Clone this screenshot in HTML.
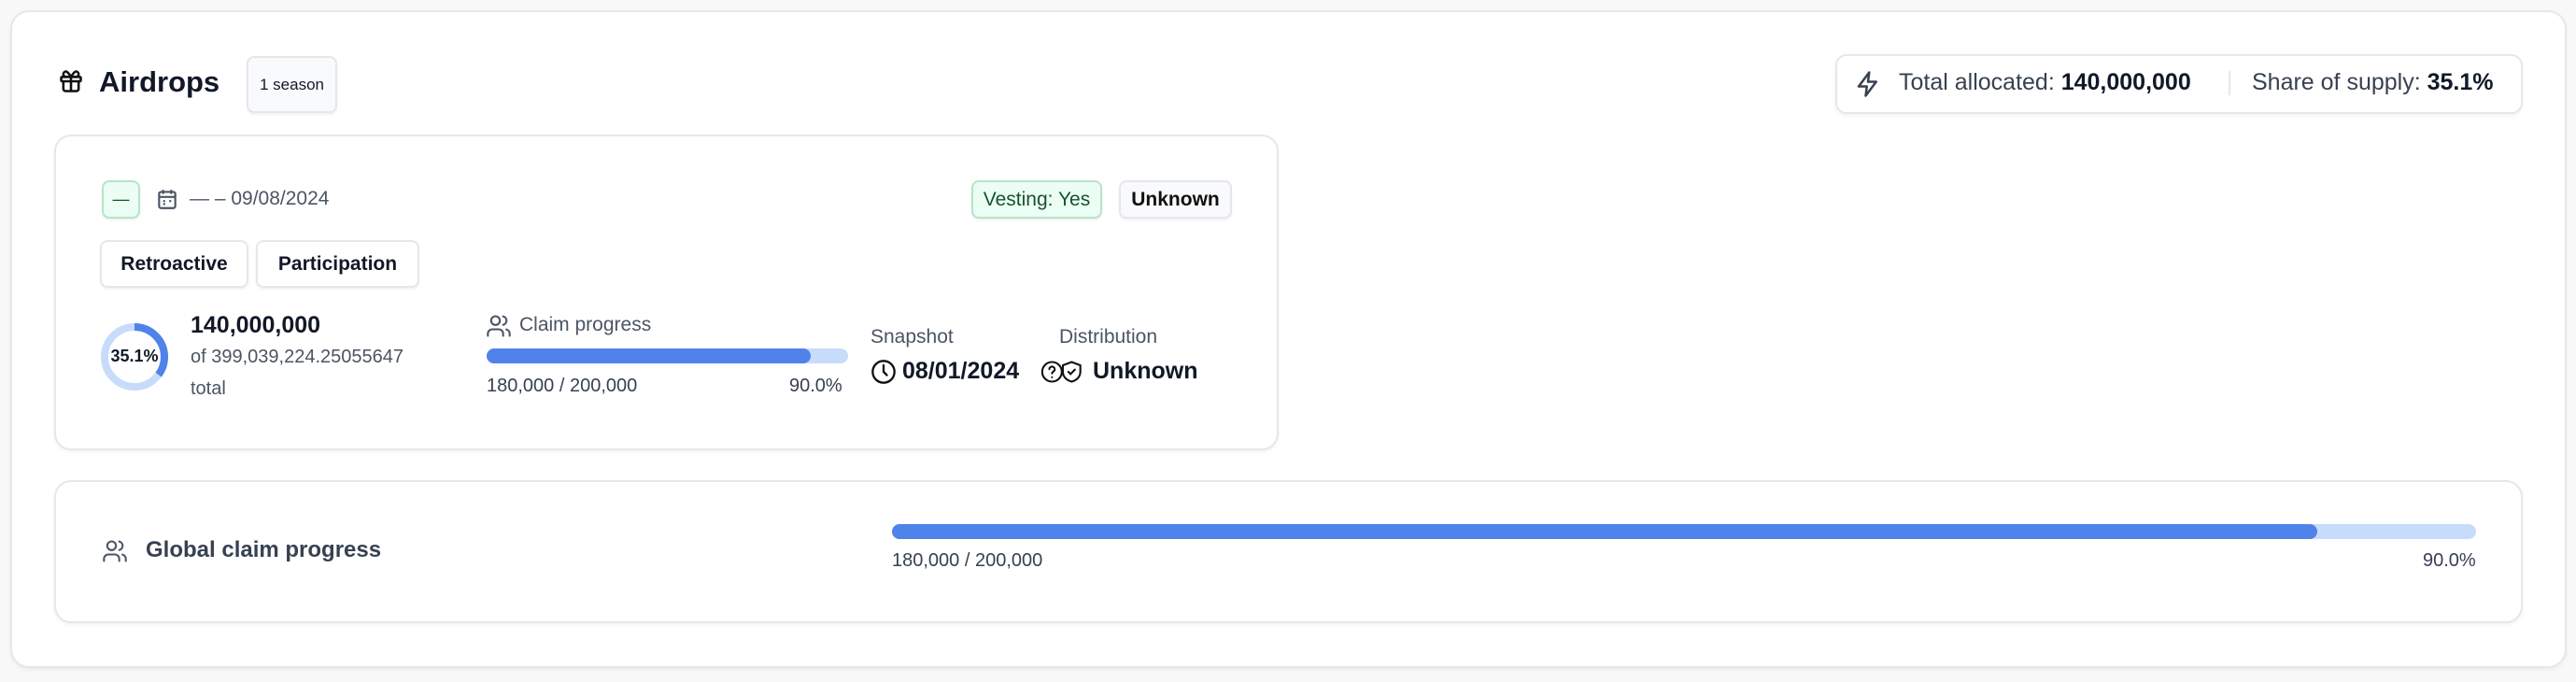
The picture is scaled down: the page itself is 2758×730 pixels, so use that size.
<!DOCTYPE html>
<html><head><meta charset="utf-8"><style>
*{box-sizing:border-box;margin:0;padding:0}
body{width:2758px;height:730px;background:#f8f8f9;font-family:"Liberation Sans",sans-serif;color:#111827;position:relative;overflow:hidden}
.abs{position:absolute}
.card{position:absolute;background:#fff;border:2px solid #e5e7eb;border-radius:18px;box-shadow:0 2px 4px rgba(0,0,0,0.05)}
.badge{position:absolute;border:2px solid #e5e7eb;border-radius:8px;background:#f9fafb;display:flex;align-items:center;justify-content:center;box-shadow:0 2px 2px rgba(0,0,0,0.05)}
.t{position:absolute;white-space:nowrap;line-height:1}
.grey{color:#4b5563}
</style></head><body>
<div class="card" style="left:11px;top:11px;width:2737px;height:704px;border-radius:20px"></div>

<svg class="abs" style="left:62px;top:73px" width="28" height="28" viewBox="0 0 24 24" fill="none" stroke="#111" stroke-width="2.2" stroke-linecap="round" stroke-linejoin="round"><rect x="3" y="8" width="18" height="4" rx="1"/><path d="M12 8v13M19 12v7a2 2 0 0 1-2 2H7a2 2 0 0 1-2-2v-7M7.5 8a2.5 2.5 0 0 1 0-5C9 3 12 8 12 8s3-5 4.5-5a2.5 2.5 0 0 1 0 5"/></svg>
<div class="t" style="left:106px;top:72px;font-size:31px;font-weight:bold">Airdrops</div>
<div class="badge" style="left:264px;top:60px;width:97px;height:61px;font-size:17px">1 season</div>

<div class="card" style="left:1965px;top:58px;width:736px;height:64px;border-radius:12px"></div>
<svg class="abs" style="left:1985px;top:75px" width="30" height="30" viewBox="0 0 24 24" fill="none" stroke="#374151" stroke-width="2" stroke-linejoin="round"><path d="M13 2L4 14h7l-1 8 9-12h-7l1-8z"/></svg>
<div class="t" style="left:2033px;top:76px;font-size:25px;color:#374151">Total allocated: <b style="color:#111827">140,000,000</b></div>
<div class="abs" style="left:2386px;top:76px;width:2px;height:26px;background:#e5e7eb"></div>
<div class="t" style="left:2411px;top:76px;font-size:25px;color:#374151">Share of supply: <b style="color:#111827">35.1%</b></div>

<div class="card" style="left:58px;top:144px;width:1311px;height:338px"></div>
<div class="badge" style="left:109px;top:193px;width:41px;height:41px;background:#ecfdf3;border-color:#b7e4c7;font-size:18px;color:#14532d">—</div>
<svg class="abs" style="left:166px;top:199px" width="26" height="28" viewBox="0 0 24 24" fill="none" stroke="#4b5563" stroke-width="2"><rect x="4" y="5" width="16" height="16" rx="2"/><path d="M4 10h16M8 3v4M16 3v4M8 14h2M14 14h2M8 17h2"/></svg>
<div class="t grey" style="left:203px;top:202px;font-size:21px">— – 09/08/2024</div>
<div class="badge" style="left:1040px;top:193px;width:140px;height:41px;background:#ecfdf3;border-color:#b7e4c7;font-size:21px;color:#14532d">Vesting: Yes</div>
<div class="badge" style="left:1198px;top:193px;width:121px;height:41px;font-size:21px;font-weight:bold;color:#111">Unknown</div>
<div class="badge" style="left:107px;top:257px;width:159px;height:51px;background:#fff;font-size:21px;font-weight:bold">Retroactive</div>
<div class="badge" style="left:274px;top:257px;width:175px;height:51px;background:#fff;font-size:21px;font-weight:bold">Participation</div>

<svg class="abs" style="left:105px;top:343px" width="78" height="78" viewBox="0 0 78 78"><circle cx="39" cy="39" r="32" fill="none" stroke="#c7dcfa" stroke-width="8"/><circle cx="39" cy="39" r="32" fill="none" stroke="#4f83ea" stroke-width="8" stroke-dasharray="70.6 201" transform="rotate(-90 39 39)"/></svg>
<div class="t" style="left:110px;top:372px;font-size:18px;font-weight:bold;width:68px;text-align:center">35.1%</div>
<div class="t" style="left:204px;top:336px;font-size:25px;font-weight:bold">140,000,000</div>
<div class="t grey" style="left:204px;top:372px;font-size:20px">of 399,039,224.25055647</div>
<div class="t grey" style="left:204px;top:406px;font-size:20px">total</div>

<svg class="abs" style="left:520px;top:335px" width="28" height="28" viewBox="0 0 24 24" fill="none" stroke="#4b5563" stroke-width="1.8" stroke-linecap="round"><circle cx="9" cy="7" r="4"/><path d="M2 21v-2a4 4 0 0 1 4-4h6a4 4 0 0 1 4 4v2M16 3.1a4 4 0 0 1 0 7.8M22 21v-2a4 4 0 0 0-3-3.9"/></svg>
<div class="t grey" style="left:556px;top:337px;font-size:21px">Claim progress</div>
<div class="abs" style="left:521px;top:373px;width:387px;height:16px;border-radius:8px;background:#c7dcfa"><div style="width:347px;height:16px;border-radius:8px;background:#4f83ea"></div></div>
<div class="t" style="left:521px;top:403px;font-size:20px;color:#374151">180,000 / 200,000</div>
<div class="t" style="left:845px;top:403px;font-size:20px;color:#374151">90.0%</div>

<div class="t grey" style="left:932px;top:350px;font-size:21px">Snapshot</div>
<svg class="abs" style="left:932px;top:384px" width="28" height="28" viewBox="0 0 24 24" fill="none" stroke="#111" stroke-width="2" stroke-linecap="round"><circle cx="12" cy="12" r="10"/><path d="M12 6v6l3 3"/></svg>
<div class="t" style="left:966px;top:385px;font-size:25px;font-weight:bold">08/01/2024</div>
<div class="t grey" style="left:1134px;top:350px;font-size:21px">Distribution</div>
<svg class="abs" style="left:1114px;top:384px" width="48" height="28" viewBox="0 0 40 24" fill="none" stroke="#111" stroke-width="1.8" stroke-linecap="round"><circle cx="10" cy="12" r="9"/><path d="M7.5 9.5a2.5 2.5 0 0 1 5 .5c0 1.5-2.5 2-2.5 3.5M10 17h.01"/><path d="M28 3l8 3v6c0 5-4 8-8 9-4-1-8-4-8-9V6z"/><path d="M25 12l2 2 4-4"/></svg>
<div class="t" style="left:1170px;top:385px;font-size:25px;font-weight:bold">Unknown</div>

<div class="card" style="left:58px;top:514px;width:2643px;height:153px"></div>
<svg class="abs" style="left:109px;top:576px" width="28" height="28" viewBox="0 0 24 24" fill="none" stroke="#4b5563" stroke-width="1.8" stroke-linecap="round"><circle cx="9" cy="7" r="4"/><path d="M2 21v-2a4 4 0 0 1 4-4h6a4 4 0 0 1 4 4v2M16 3.1a4 4 0 0 1 0 7.8M22 21v-2a4 4 0 0 0-3-3.9"/></svg>
<div class="t" style="left:156px;top:577px;font-size:24px;font-weight:bold;color:#374151">Global claim progress</div>
<div class="abs" style="left:955px;top:561px;width:1696px;height:16px;border-radius:8px;background:#c7dcfa"><div style="width:1526px;height:16px;border-radius:8px;background:#4f83ea"></div></div>
<div class="t" style="left:955px;top:590px;font-size:20px;color:#374151">180,000 / 200,000</div>
<div class="t" style="left:2594px;top:590px;font-size:20px;color:#374151">90.0%</div>
</body></html>
